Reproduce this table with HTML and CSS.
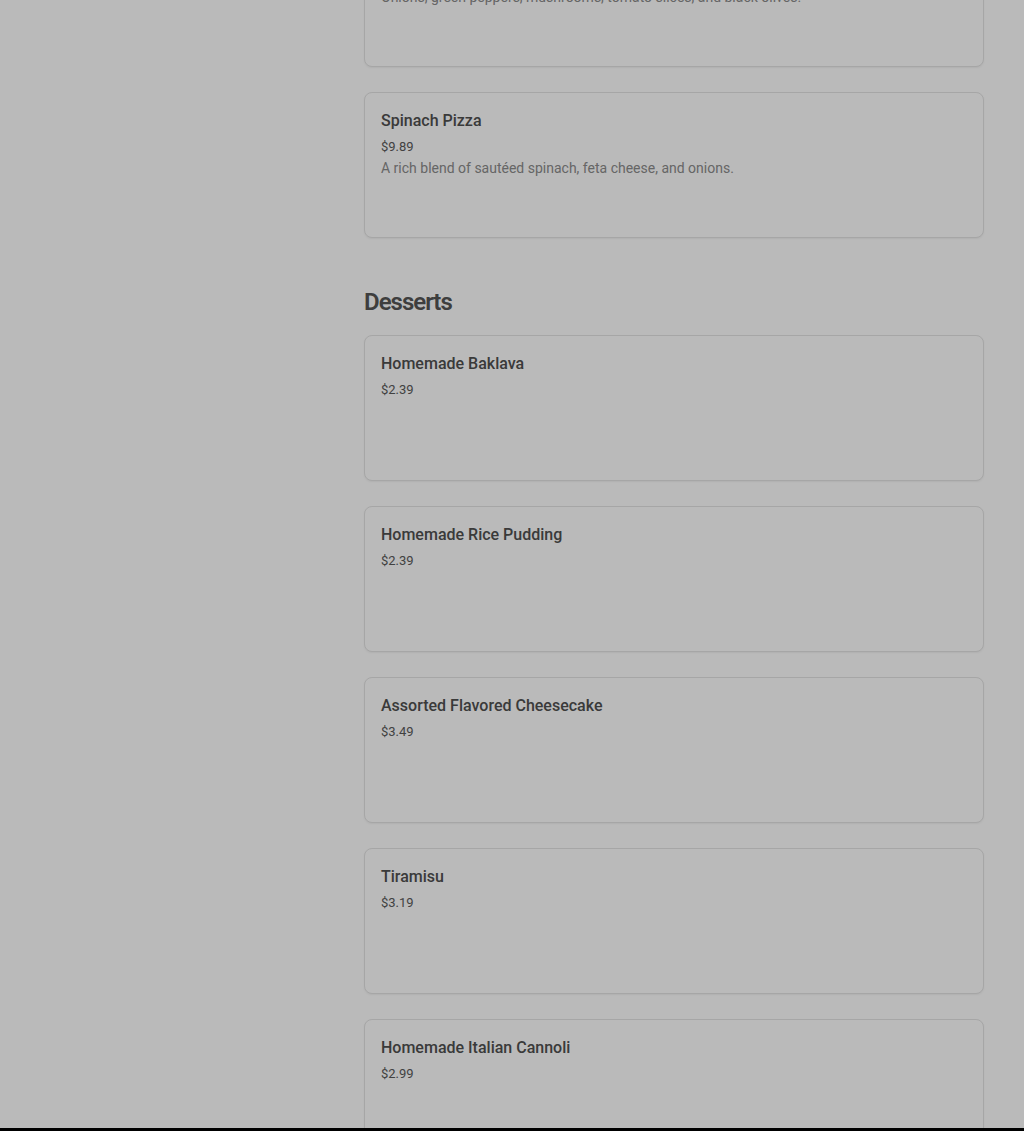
FILE: index.html
```html
<!DOCTYPE html>
<html lang="en">
<head>
    <meta charset="UTF-8">
    <meta name="viewport" content="width=device-width, initial-scale=1.0">
    <title>Menu</title>
    <link rel="stylesheet" href="styles.css">
</head>
<body>

    <div class="page">
        <!-- Left side column (empty in this view) -->
        <aside class="side"></aside>

        <main class="menu">
            <section class="category">
                <div class="item-list">
                    <div class="item">
                        <div class="item-name">Veggie Pizza</div>
                        <div class="item-price">$9.89</div>
                        <div class="item-desc">Onions, green peppers, mushrooms, tomato slices, and black olives.</div>
                    </div>
                    <div class="item">
                        <div class="item-name">Spinach Pizza</div>
                        <div class="item-price">$9.89</div>
                        <div class="item-desc">A rich blend of sautéed spinach, feta cheese, and onions.</div>
                    </div>
                </div>
            </section>

            <section class="category">
                <h2 class="category-title">Desserts</h2>
                <div class="item-list">
                    <div class="item">
                        <div class="item-name">Homemade Baklava</div>
                        <div class="item-price">$2.39</div>
                    </div>
                    <div class="item">
                        <div class="item-name">Homemade Rice Pudding</div>
                        <div class="item-price">$2.39</div>
                    </div>
                    <div class="item">
                        <div class="item-name">Assorted Flavored Cheesecake</div>
                        <div class="item-price">$3.49</div>
                    </div>
                    <div class="item">
                        <div class="item-name">Tiramisu</div>
                        <div class="item-price">$3.19</div>
                    </div>
                    <div class="item">
                        <div class="item-name">Homemade Italian Cannoli</div>
                        <div class="item-price">$2.99</div>
                    </div>
                </div>
            </section>
        </main>
    </div>

    <!-- Dim layer over the page -->
    <div class="overlay"></div>
    <div class="bottom-bar"></div>

</body>
</html>
```

FILE: styles.css
```css
body {
    margin: 0;
    background: #ffffff;
    font-family: Roboto, "Liberation Sans", sans-serif;
    color: #4a4a4a;
    overflow: hidden;
}

.page {
    display: grid;
    grid-template-columns: 364px 620px;
}

.menu {
    display: flex;
    flex-direction: column;
    gap: 48px;
    margin-top: -79px; /* list is scrolled, first card is cut off */
}

.category-title {
    margin: 0 0 17px 0;
    font-size: 24px;
    line-height: 32px;
    font-weight: 600;
    letter-spacing: -1px;
    color: #555555;
}

.item-list {
    display: flex;
    flex-direction: column;
    gap: 25px;
}

.item {
    box-sizing: border-box;
    height: 146px;
    padding: 16px;
    border: 1px solid #e4e4e4;
    border-radius: 8px;
    box-shadow: 0 1px 2px rgba(0, 0, 0, 0.06);
    background: #ffffff;
}

.item-name {
    font-size: 16px;
    line-height: 24px;
    font-weight: 500;
    color: #505050;
}

.item-price {
    margin-top: 4px;
    font-size: 13px;
    line-height: 20px;
    color: #5a5a5a;
}

.item-desc {
    margin-top: 1px;
    font-size: 14px;
    line-height: 20px;
    color: #8c8c8c;
}

.overlay {
    position: fixed;
    top: 0;
    left: 0;
    width: 100%;
    height: 100%;
    background: rgba(0, 0, 0, 0.27);
}

.bottom-bar {
    position: fixed;
    left: 0;
    bottom: 0;
    width: 100%;
    height: 3px;
    background: #000000;
}
```
